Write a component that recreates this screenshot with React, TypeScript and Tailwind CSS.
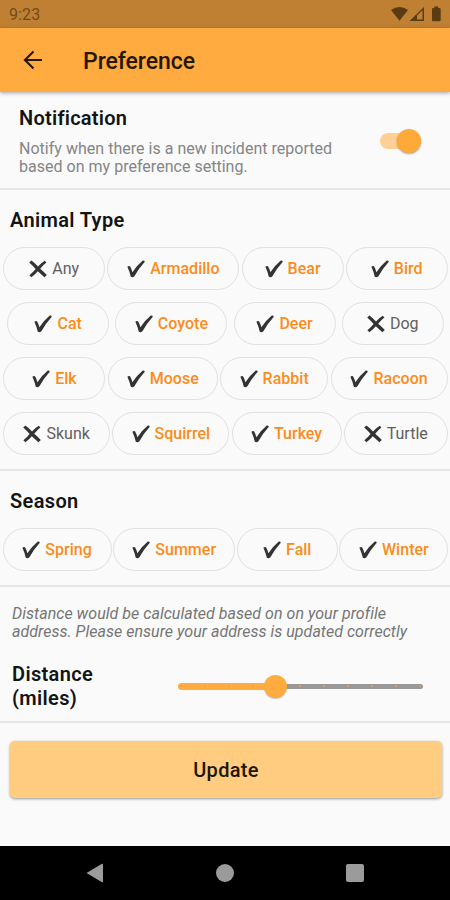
import clsx from "clsx";

type Option = { label: string; on: boolean; width: string };

const animals: Option[][] = [
  [
    { label: "Any", on: false, width: "w-[102px]" },
    { label: "Armadillo", on: true, width: "w-[132px]" },
    { label: "Bear", on: true, width: "w-[102px]" },
    { label: "Bird", on: true, width: "w-[102px]" },
  ],
  [
    { label: "Cat", on: true, width: "w-[102px]" },
    { label: "Coyote", on: true, width: "w-[112px]" },
    { label: "Deer", on: true, width: "w-[102px]" },
    { label: "Dog", on: false, width: "w-[102px]" },
  ],
  [
    { label: "Elk", on: true, width: "w-[102px]" },
    { label: "Moose", on: true, width: "w-[110px]" },
    { label: "Rabbit", on: true, width: "w-[108px]" },
    { label: "Racoon", on: true, width: "w-[117px]" },
  ],
  [
    { label: "Skunk", on: false, width: "w-[107px]" },
    { label: "Squirrel", on: true, width: "w-[117px]" },
    { label: "Turkey", on: true, width: "w-[110px]" },
    { label: "Turtle", on: false, width: "w-[104px]" },
  ],
];

const seasons: Option[] = [
  { label: "Spring", on: true, width: "w-[109px]" },
  { label: "Summer", on: true, width: "w-[122px]" },
  { label: "Fall", on: true, width: "w-[101px]" },
  { label: "Winter", on: true, width: "w-[109px]" },
];

function CheckMark() {
  return (
    <svg width="18" height="18" viewBox="0 0 18 18" fill="#333">
      <path d="M0.4 6.8 Q1.6 5.4 3 6.2 Q4.6 8.8 5.4 12.2 Q10 5.4 15.8 0.6 Q17.4 0.3 17.8 1.8 Q12 8.2 7.4 16.2 Q5.8 17.8 3.8 16.8 Q2.6 11.6 0.4 6.8Z" />
    </svg>
  );
}

function CrossMark() {
  return (
    <svg width="18" height="18" viewBox="0 0 18 18" fill="#333">
      <path d="M0.2 2.6 L2.4 0.6 Q6 3.2 9 6.4 Q12.2 2.9 15.8 0.8 L17.4 2.6 Q13.8 5.4 11.2 8.8 Q14.8 11.8 17.8 15 L15.4 17.2 Q12 14.2 8.8 11.3 Q6 14.8 2.4 17.2 L0.4 15.2 Q3.8 12.6 6.6 9 Q3.6 5.6 0.2 2.6Z" />
    </svg>
  );
}

function Chip({ label, on, width }: Option) {
  return (
    <button
      className={clsx(
        "flex h-[43px] shrink-0 items-center justify-center gap-[5px] rounded-full border border-[#e0e0e0] text-[16px] leading-none tracking-[0.02px]",
        width,
        on ? "font-medium text-[#fb8c1a]" : "font-normal text-[#606060]"
      )}
    >
      {on ? <CheckMark /> : <CrossMark />}
      <span className="pt-px">{label}</span>
    </button>
  );
}

function ChipRow({ options }: { options: Option[] }) {
  return (
    <div className="flex justify-evenly pl-px">
      {options.map((o) => (
        <Chip key={o.label} {...o} />
      ))}
    </div>
  );
}

function StatusBar() {
  return (
    <div className="flex h-7 items-center justify-between bg-[#bf8033] pl-[9px] pr-2 text-[#714b1c]">
      <span className="pt-[2px] text-[16px] tracking-[0.1px]">9:23</span>
      <svg width="51" height="16" viewBox="0 0 51 16" fill="#5a3b12">
        <path d="M0 4 Q8.5 -2 17 4 L8.5 14.8Z" />
        <path d="M18.5 15 L33 1 V15Z M26 9.6 V13.5 H31.5 V4.3Z" fillRule="evenodd" />
        <path d="M41 3 Q41 2 42 2 H43.3 V0.6 H47.2 V2 H48.5 Q49.7 2 49.7 3 V14 Q49.7 15.2 48.5 15.2 H42 Q41 15.2 41 14Z" />
      </svg>
    </div>
  );
}

function AppBar() {
  return (
    <header className="flex h-16 items-center bg-[#ffab40] pl-[23px] shadow-[0_1px_4px_rgba(0,0,0,0.35)]">
      <svg width="20" height="20" viewBox="0 0 20 20" fill="none" stroke="#241803" strokeWidth="2.1">
        <path d="M19 10 H2.2 M10.5 1.4 L1.9 10 L10.5 18.6" />
      </svg>
      <h1 className="pl-10 pt-[2px] text-[23px] font-medium leading-none tracking-[-0.05px] text-[#241803]">
        Preference
      </h1>
    </header>
  );
}

function DistanceSlider() {
  return (
    <div className="relative flex h-6 w-[245px] items-center">
      <div className="h-[7px] w-[98px] rounded-l-full bg-[#ffab40]" />
      <div className="h-[5px] flex-1 rounded-r-full bg-[#999]" />
      <div className="absolute inset-x-[2px] flex justify-between">
        {Array.from({ length: 11 }, (_, i) => (
          <span
            key={i}
            className={clsx("size-[2px] rounded-full", i < 4 ? "bg-[#dca357]" : "bg-[#e6a24c]")}
          />
        ))}
      </div>
      <div className="absolute left-[86px] size-[23px] rounded-full bg-[#ffab40] shadow-[0_1px_1px_rgba(0,0,0,0.2)]" />
    </div>
  );
}

export default function App() {
  return (
    <div className="flex h-[900px] w-[450px] flex-col overflow-hidden bg-[#fafafa] font-['Roboto',sans-serif] text-[#141414]">
      <StatusBar />
      <AppBar />

      <section className="flex h-[98px] items-center justify-between border-b-2 border-[#e6e6e6] pl-[19px] pr-[29px]">
        <div className="pt-[2px]">
          <h2 className="text-[20px] font-semibold leading-6 tracking-[0.25px]">Notification</h2>
          <p className="mt-[10px] w-[330px] text-[16px] leading-[18px] tracking-[0.02px] text-[#858585]">
            Notify when there is a new incident reported
            <br />
            based on my preference setting.
          </p>
        </div>
        <div className="mt-[2px] flex h-4 w-[41px] items-center justify-end rounded-full bg-[#ffd096]">
          <div className="size-[24px] shrink-0 rounded-full bg-[#ffa938] shadow-[0_1px_2px_rgba(0,0,0,0.35)]" />
        </div>
      </section>

      <section className="h-[281px] border-b-2 border-[#e6e6e6] pt-[18px]">
        <h2 className="pl-[10px] text-[20px] font-semibold leading-6 tracking-[0.35px]">Animal Type</h2>
        <div className="mt-[15px] flex flex-col gap-3">
          {animals.map((row) => (
            <ChipRow key={row[0].label} options={row} />
          ))}
        </div>
      </section>

      <section className="h-[116px] border-b-2 border-[#e6e6e6] pt-[18px]">
        <h2 className="pl-[10px] text-[20px] font-semibold leading-6 tracking-[0.35px]">Season</h2>
        <div className="mt-[15px]">
          <ChipRow options={seasons} />
        </div>
      </section>

      <section className="h-[136px] border-b-2 border-[#e6e6e6] pl-3 pr-[27px] pt-[18px]">
        <p className="whitespace-nowrap text-[16px] italic leading-[18px] tracking-[0.03px] text-[#757575]">
          Distance would be calculated based on on your profile
          <br />
          address. Please ensure your address is updated correctly
        </p>
        <div className="mt-[21px] flex items-center justify-between">
          <h2 className="w-24 text-[20px] font-semibold leading-6 tracking-[0.35px]">Distance (miles)</h2>
          <DistanceSlider />
        </div>
      </section>

      <div className="flex-1 pl-[10px] pr-2 pt-[18px]">
        <button className="h-[57px] w-full rounded-[5px] bg-[#ffcc80] text-[20px] font-medium tracking-[0.3px] text-[#1d1608] shadow-[0_1px_3px_rgba(0,0,0,0.4)]">
          Update
        </button>
      </div>

      <nav className="flex h-[54px] items-center justify-between bg-black pl-[86px] pr-[86px]">
        <svg width="17" height="20" viewBox="0 0 17 20" fill="#9b9b9b">
          <path d="M0.5 10 L16 0.8 Q17 0.4 17 1.5 V18.5 Q17 19.6 16 19.2Z" />
        </svg>
        <span className="size-[18px] rounded-full bg-[#9b9b9b]" />
        <span className="size-[18px] rounded-[2px] bg-[#9b9b9b]" />
      </nav>
    </div>
  );
}
